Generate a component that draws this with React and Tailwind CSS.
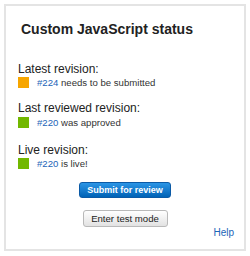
import React from 'react';

function StatusRow({ color, rev, text }) {
  return (
    <div className="flex items-center h-[11px]">
      <span className={`w-[11px] h-[11px] ${color}`} />
      <span className="ml-[8px] text-[9.6px] leading-[12px] text-[#333]">
        <a className="text-[#1b64b8]">{rev}</a> {text}
      </span>
    </div>
  );
}

function App() {
  return (
    <div
      className="w-[250px] h-[256px] bg-white pt-[4px] pl-[4px]"
      style={{ fontFamily: '"Liberation Sans", Arial, sans-serif' }}
    >
      <div className="w-[242px] h-[247px] border-2 border-[#e4e4e4] flex flex-col pl-[12px] pr-[10px]">
        <h1 className="mt-[15px] ml-[3px] text-[14px] leading-[16px] font-bold text-[#222]">
          Custom JavaScript status
        </h1>

        <div className="mt-[25px] text-[12px] leading-[14px] text-[#222]">Latest revision:</div>
        <div className="mt-[1px]">
          <StatusRow color="bg-[#f7a600]" rev="#224" text="needs to be submitted" />
        </div>

        <div className="mt-[13px] text-[12px] leading-[14px] text-[#222]">Last reviewed revision:</div>
        <div className="mt-[2px]">
          <StatusRow color="bg-[#72b800]" rev="#220" text="was approved" />
        </div>

        <div className="mt-[15px] text-[12px] leading-[14px] text-[#222]">Live revision:</div>
        <div className="mt-[1px]">
          <StatusRow color="bg-[#72b800]" rev="#220" text="is live!" />
        </div>

        <div className="flex flex-col items-center ml-[-2px]">
          <button className="mt-[13px] w-[92px] h-[16px] rounded-[3px] border border-[#0b5aa6] bg-gradient-to-b from-[#2a95e6] to-[#0063b6] text-white text-[9px] font-bold leading-[14px]">
            Submit for review
          </button>
          <button className="mt-[12px] w-[85px] h-[17px] rounded-[3px] border border-[#b9b9b9] bg-gradient-to-b from-[#ffffff] to-[#e2e2e2] text-[#222] text-[9.6px] leading-[15px]">
            Enter test mode
          </button>
        </div>

        <div className="self-end text-[10px] leading-[12px] text-[#1b64b8]">Help</div>
      </div>
    </div>
  );
}

export default App;
